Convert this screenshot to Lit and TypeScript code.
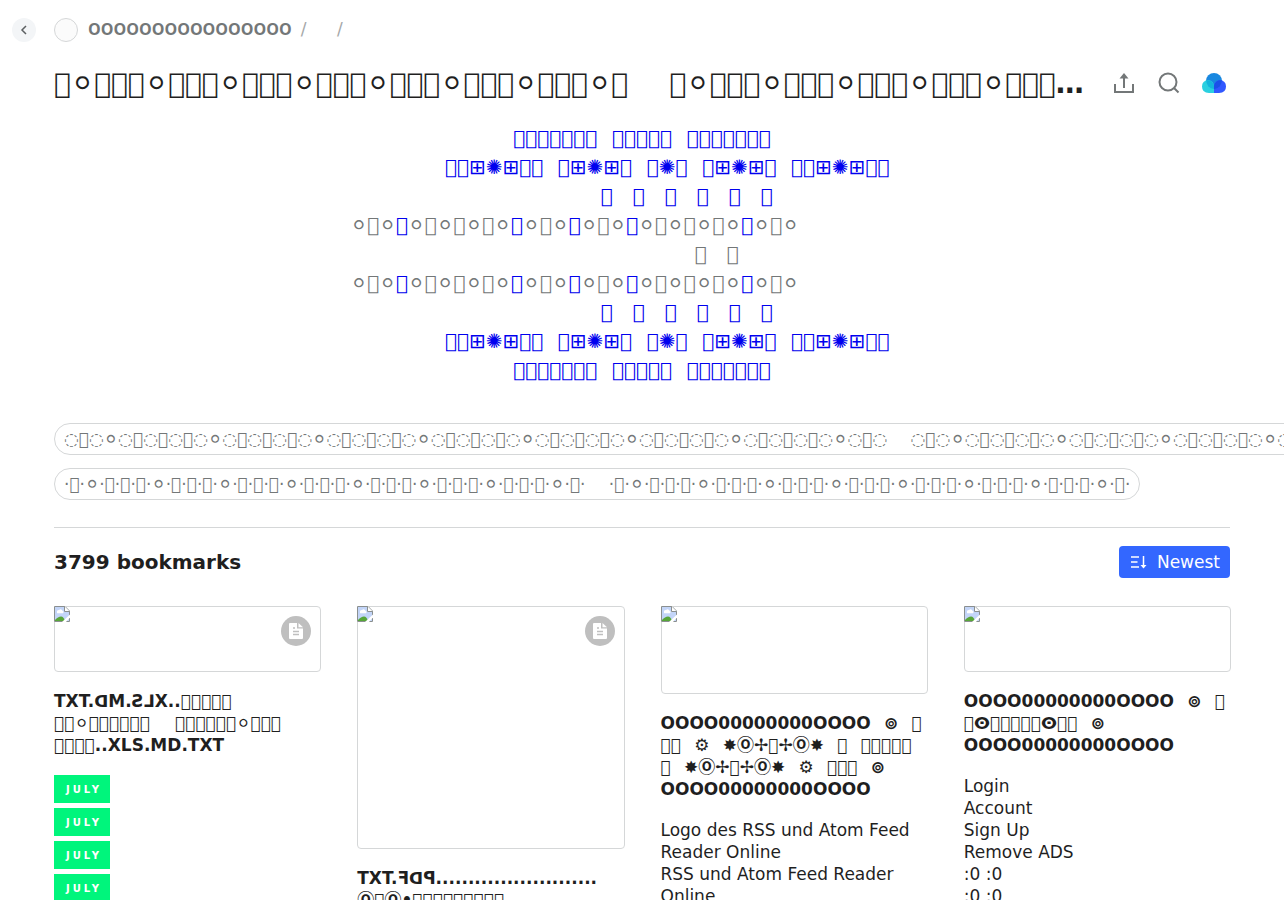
import { LitElement, html, css, svg, nothing } from "lit";
import { customElement, property } from "lit/decorators.js";

// G is a private-use sign shown as an empty box, B a braille blank used as a wide space.
const G = "\uE000";
const B = "\u2800";
const EM = "\u2003";
const NB = "\u00a0";
const RING = "\u26AA";

const g = (n: number) => G.repeat(n);

const headHalf = g(1) + RING + (g(3) + RING).repeat(7) + g(1);
const heading = headHalf + B + NB + NB + headHalf;

const chain = (sep: string) => {
  const one = sep + G + sep;
  const three = sep + (G + sep).repeat(3);
  const half = one + RING + (three + RING).repeat(7) + one;
  return half + B + NB + NB + half;
};

const rowA = g(7) + B + g(5) + B + g(7);
const wide = g(2) + "⊞✺⊞" + g(2);
const mid = g(1) + "⊞✺⊞" + g(1);
const rowB = B + B + B + NB + [wide, mid, g(1) + "✺" + g(1), mid, wide].join(B);
const rowC = B + EM + EM + EM + B + Array(6).fill(G).join(EM);
const rowE = B + EM.repeat(6) + B + G + EM + G;
const linked = new Set([1, 5, 7, 9, 13]);

interface Bookmark {
  ratio: string;
  file: boolean;
  title: string[];
  text?: string[];
  tags?: string[];
}

const bookmarks: Bookmark[] = [
  {
    ratio: "low",
    file: true,
    title: [
      "TXT.ᗡM.Ƨ⅃X.." + g(5),
      g(2) + RING + g(6) + B + NB + NB + g(6) + RING + g(3),
      g(4) + "..XLS.MD.TXT",
    ],
    tags: ["JULY", "JULY", "JULY", "JULY", "JULY"],
  },
  {
    ratio: "tall",
    file: true,
    title: ["TXT.ꟻᗡꟼ" + ".".repeat(25), "Ⓞ" + G + "Ⓞ•" + g(9)],
  },
  {
    ratio: "medium",
    file: false,
    title: [
      "OOOO00000000OOOO" + B + "⊚" + B + G,
      g(2) + B + "⚙" + B + "✸Ⓞ✢" + G + "✢Ⓞ✸" + B + G + B + g(5),
      G + B + "✸Ⓞ✢" + G + "✢Ⓞ✸" + B + "⚙" + B + g(3) + B + "⊚",
      "OOOO00000000OOOO",
    ],
    text: ["Logo des RSS und Atom Feed Reader Online", "RSS und Atom Feed Reader Online"],
  },
  {
    ratio: "low",
    file: false,
    title: [
      "OOOO00000000OOOO" + B + "⊚" + B + G,
      G + "\u2D59" + g(5) + "\u2D59" + g(2) + B + "⊚",
      "OOOO00000000OOOO",
    ],
    text: ["Login", "Account", "Sign Up", "Remove ADS", ":0 :0", ":0 :0"],
  },
];

const brokenImage = html`<svg class="broken" width="16" height="16" viewBox="0 0 16 16" aria-hidden="true">
  ${svg`<path d="M0 0H11L16 5V16H0Z" fill="#fff"/>
  <path d="M1 1H10.5V5.5H15V15H1Z" fill="#c3d5f8"/>
  <path d="M3 6.2a1.6 1.6 0 0 1 2-2a2 2 0 0 1 3.6.8a1.2 1.2 0 0 1 .2 2.3H3.4A.9.9 0 0 1 3 6.200Z" fill="#fff"/>
  <path d="M1 15V14C3 12 5 10.500 7 10.500S10 12 11 15Z" fill="#57a639"/>
  <path d="M.5 15.500V.5H11L15.500 5V15.500Z" fill="none" stroke="#8a8f8f"/>
  <path d="M10.500 .5V5.500H15.500" fill="#fff" stroke="#8a8f8f"/>
  <path d="M7.500 16.500L16.500 8V11L11.500 16.500Z" fill="#fff"/>`}
</svg>`;

@customElement("bookmark-card")
export class BookmarkCard extends LitElement {
  @property({ attribute: false }) item!: Bookmark;

  static styles = css`
    :host { display: block; min-width: 0; }
    .cover {
      position: relative;
      box-sizing: border-box;
      border: 1px solid #d5d7d8;
      border-radius: 4px;
      margin-bottom: 18px;
    }
    .low { height: 66px; }
    .medium { height: 88px; }
    .tall { height: 243px; }
    .broken { position: absolute; left: -1px; top: -1px; }
    .badge {
      position: absolute;
      top: 9px;
      right: 9px;
      width: 30px;
      height: 30px;
      border-radius: 50%;
      background: #bfbfbf;
      display: grid;
      place-items: center;
    }
    h3 {
      margin: 0 0 19px;
      font-family: "DejaVu Sans", "Noto Sans CJK JP", sans-serif;
      font-size: 17px;
      line-height: 22px;
      font-weight: 700;
      white-space: nowrap;
    }
    p { margin: 0; font-size: 17px; line-height: 22px; }
    .tags { display: flex; flex-direction: column; align-items: flex-start; gap: 5px; }
    .tag {
      background: #00f57c;
      color: #fff;
      font-size: 10px;
      line-height: 27px;
      font-weight: 700;
      letter-spacing: 3px;
      padding: 1px 8px 0 12px;
    }
  `;

  render() {
    const b = this.item;
    return html`
      <article>
        <div class="cover ${b.ratio}">
          ${brokenImage}
          ${b.file
            ? html`<span class="badge"><svg width="16" height="16" viewBox="0 0 16 16" aria-hidden="true">
                <path d="M2 0H9V5.500H15V15Q15 16 14 16H2Q1 16 1 15V1Q1 0 2 0Z" fill="#fff"/>
                <path d="M10.500 0L15 4.300H10.500Z" fill="#fff"/>
                <path d="M5 5H7M5 8.500H11M5 11.500H11" stroke="#bfbfbf" stroke-width="1.500"/>
              </svg></span>`
            : nothing}
        </div>
        <h3>${b.title.map((line, i) => html`${i ? html`<br>` : nothing}${line}`)}</h3>
        ${b.text?.map((t) => html`<p>${t}</p>`)}
        ${b.tags ? html`<div class="tags">${b.tags.map((t) => html`<span class="tag">${t}</span>`)}</div>` : nothing}
      </article>
    `;
  }
}

@customElement("app-root")
export class AppRoot extends LitElement {
  static styles = css`
    :host {
      display: block;
      height: 100vh;
      overflow: hidden;
      background: #fff;
      color: #1f1f1f;
      font-family: "DejaVu Sans", sans-serif;
    }
    a { color: inherit; text-decoration: none; }
    button { font: inherit; border: 0; padding: 0; background: none; color: inherit; cursor: pointer; }
    svg { display: block; }
    .crumbs {
      display: flex;
      align-items: center;
      height: 24px;
      padding: 18px 12px 0;
      font-size: 17px;
      color: #737778;
    }
    .back {
      width: 24px;
      height: 24px;
      border-radius: 50%;
      background: #f3f5f7;
      display: grid;
      place-items: center;
      margin-right: 18px;
    }
    .avatar {
      box-sizing: border-box;
      width: 24px;
      height: 24px;
      border: 1px solid #d5d7d8;
      border-radius: 50%;
      background: #fbfbfb;
      margin-right: 10px;
    }
    .trail { display: flex; align-items: center; padding-bottom: 2px; }
    .owner { font-family: "Open Sans", sans-serif; font-size: 16px; font-weight: 700; }
    .slash { margin: 0 9px; color: #a5a8a9; }
    .page { padding: 0 54px; }
    .top { display: flex; align-items: center; margin-top: 24px; height: 36px; }
    h1 {
      flex: 1;
      min-width: 0;
      margin: 0;
      font-size: 28px;
      line-height: 36px;
      font-weight: 700;
      white-space: nowrap;
      overflow: hidden;
      text-overflow: ellipsis;
    }
    .actions { display: flex; gap: 21px; margin: 0 4px 0 24px; color: #737778; }
    .about {
      margin: 22px 0 38px;
      font-size: 20px;
      line-height: 29px;
      text-align: center;
      white-space: pre;
      color: #737778;
    }
    .about a { color: #0000ee; }
    .pills { display: flex; flex-direction: column; align-items: flex-start; gap: 13px; }
    .pill {
      box-sizing: border-box;
      height: 32px;
      line-height: 30px;
      padding: 0 9px;
      border: 1px solid #d5d7d8;
      border-radius: 16px;
      font-size: 17px;
      color: #737778;
      white-space: nowrap;
    }
    hr { border: 0; border-top: 1px solid #d5d7d8; margin: 27px 0 18px; }
    .bar { display: flex; justify-content: space-between; align-items: center; }
    h2 { margin: 0; font-size: 20px; line-height: 32px; font-weight: 700; }
    .bar .sort {
      display: flex;
      align-items: center;
      gap: 10px;
      height: 32px;
      padding: 0 10px;
      border-radius: 4px;
      background: #3367ff;
      color: #fff;
      font-size: 17px;
    }
    .grid {
      display: grid;
      grid-template-columns: repeat(4, minmax(0, 1fr));
      gap: 36px;
      margin: 28px -1px 0 0;
      align-items: start;
    }
  `;

  private ringRow() {
    const cells = Array.from({ length: 15 }, (_, i) => i);
    return html`${cells.map((i) => html`${RING}${linked.has(i) ? html`<a href="#${i}">${G}</a>` : G}`)}${RING}${EM.repeat(6)}${B}`;
  }

  private link(text: string) {
    return html`<a href="#top">${text}</a>`;
  }

  render() {
    return html`
      <nav class="crumbs">
        <button class="back" aria-label="Back">
          <svg width="12" height="12" viewBox="0 0 12 12"><path d="M8 2L4 6L8 10" fill="none" stroke="#5b5f61" stroke-width="1.500"/></svg>
        </button>
        <span class="avatar"></span>
        <div class="trail">
          <a class="owner" href="#owner">OOOOOOOOOOOOOOOO</a>
          <span class="slash">/</span><a href="#parent">${B}</a><span class="slash">/</span>
        </div>
      </nav>
      <main class="page">
        <header class="top">
          <h1>${heading}</h1>
          <div class="actions">
            <button aria-label="Share">
              <svg width="24" height="24" viewBox="0 0 24 24" fill="none" stroke="currentColor" stroke-width="2">
                <path d="M3 12V20H21V12M12 16V5"/><path d="M12 1L16.500 6.500H7.500Z" fill="currentColor" stroke="none"/>
              </svg>
            </button>
            <button aria-label="Search">
              <svg width="24" height="24" viewBox="0 0 24 24" fill="none" stroke="currentColor" stroke-width="2">
                <circle cx="11" cy="10" r="8.500"/><path d="M17 16L21.500 20.500"/>
              </svg>
            </button>
            <a href="#home" aria-label="Home">
              <svg width="24" height="24" viewBox="0 0 24 24">
                <circle cx="12" cy="9" r="8" fill="#1988e0"/>
                <path d="M6.500 8Q0 8.500 0 14.500Q0 21 7 21H12V14A6.500 6.500 0 0 0 6.500 8Z" fill="#2ad0e0"/>
                <path d="M17.500 8Q24 8.500 24 14.500Q24 21 17 21H12V14A6.500 6.500 0 0 1 17.500 8Z" fill="#3158ff"/>
                <path d="M4.300 8.300A6.500 6.500 0 0 1 12 14V17A8 8 0 0 1 4.300 8.300Z" fill="#14b4dc"/>
                <path d="M19.700 8.300A6.500 6.500 0 0 0 12 14V17A8 8 0 0 0 19.700 8.300Z" fill="#1b50e8"/>
              </svg>
            </a>
          </div>
        </header>
        <div class="about"><div>${this.link(rowA)}</div><div>${this.link(rowB)}</div><div>${this.link(rowC)}</div><div>${this.ringRow()}</div><div>${rowE}</div><div>${this.ringRow()}</div><div>${this.link(rowC)}</div><div>${this.link(rowB)}</div><div>${this.link(rowA)}</div></div>
        <div class="pills">
          <a class="pill" href="#one">${chain("\u25CC")}</a>
          <a class="pill" href="#two">${chain("\u00B7")}</a>
        </div>
        <hr>
        <div class="bar">
          <h2>3799 bookmarks</h2>
          <button class="sort">
            <svg width="18" height="18" viewBox="0 0 18 18" fill="none" stroke="currentColor" stroke-width="1.500">
              <path d="M2 4H10M2 9H8.500M2 14H10M14.500 3V14"/><path d="M11.500 12H17.500L14.500 15.500Z" fill="currentColor" stroke="none"/>
            </svg>
            Newest
          </button>
        </div>
        <section class="grid">
          ${bookmarks.map((b) => html`<bookmark-card .item=${b}></bookmark-card>`)}
        </section>
      </main>
    `;
  }
}
